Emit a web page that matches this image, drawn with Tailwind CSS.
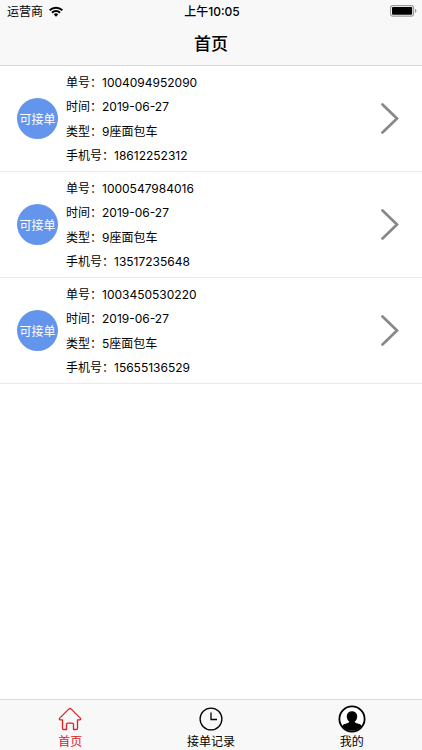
<!DOCTYPE html>
<html lang="zh-CN">
<head>
<meta charset="utf-8">
<meta name="viewport" content="width=device-width, initial-scale=1">
<title>首页</title>
<script src="https://cdn.jsdelivr.net/npm/@tailwindcss/browser@4"></script>
</head>
<body class="flex min-h-screen flex-col bg-white font-[Inter,'Noto_Sans_CJK_SC',sans-serif] text-xs text-black">
<header class="border-b border-[#d8d8d8] bg-[#f8f8f8]">
  <div class="grid h-[22px] grid-cols-3 items-center pr-[5px] pl-[7px]">
    <div class="flex items-center gap-[6px]">
      <span class="pt-0.5">运营商</span>
      <svg class="h-[11px] w-[14px]" viewBox="0 0 14 11" aria-hidden="true"><g fill="none" stroke="#000" stroke-width="2"><path d="M.7 4.2a9 9 0 0 1 12.6 0"/><path d="M3 6.7a5.7 5.7 0 0 1 8 0"/></g><path d="M4.8 8.4a3.1 3.1 0 0 1 4.4 0L7 10.7Z"/></svg>
    </div>
    <time class="pt-0.5 text-center font-medium">上午10:05</time>
    <svg class="h-[12px] w-[27px] justify-self-end" viewBox="0 0 27 12" aria-hidden="true"><rect x=".6" y=".6" width="23" height="10.5" rx="2.4" fill="#fff" stroke="#999" stroke-width="1.1"/><rect x="2" y="2" width="20.2" height="7.7" rx="1"/><path d="M25 3.8c2 .8 2 3.4 0 4.2Z" fill="#999"/></svg>
  </div>
  <h1 class="flex h-[43px] items-center justify-center pt-0.5 text-[17px] font-medium">首页</h1>
</header>
<main class="flex-1">
  <ul>
    <li class="border-b border-[#e9e9e9]">
      <a href="#" class="flex min-h-[105px] items-center pr-[22px] pl-[17px]">
        <span class="mr-2 flex size-[41px] shrink-0 items-center justify-center rounded-full bg-[#6495ed] pt-0.5 whitespace-nowrap text-white">可接单</span>
        <div class="grid flex-1 auto-rows-fr self-stretch pt-[5px] pb-[3px]">
          <p class="flex items-center">单号：1004094952090</p><p class="flex items-center">时间：2019-06-27</p><p class="flex items-center">类型：9座面包车</p><p class="flex items-center">手机号：18612252312</p>
        </div>
        <svg class="h-[31px] w-5" viewBox="0 0 20 31" fill="none" stroke="#888" stroke-width="2.7" stroke-linecap="round" aria-hidden="true"><path d="M2.500 1.500 17 15.500 2.500 29.500"/></svg>
      </a>
    </li>
    <li class="border-b border-[#e9e9e9]">
      <a href="#" class="flex min-h-[105px] items-center pr-[22px] pl-[17px]">
        <span class="mr-2 flex size-[41px] shrink-0 items-center justify-center rounded-full bg-[#6495ed] pt-0.5 whitespace-nowrap text-white">可接单</span>
        <div class="grid flex-1 auto-rows-fr self-stretch pt-[5px] pb-[3px]">
          <p class="flex items-center">单号：1000547984016</p><p class="flex items-center">时间：2019-06-27</p><p class="flex items-center">类型：9座面包车</p><p class="flex items-center">手机号：13517235648</p>
        </div>
        <svg class="h-[31px] w-5" viewBox="0 0 20 31" fill="none" stroke="#888" stroke-width="2.7" stroke-linecap="round" aria-hidden="true"><path d="M2.500 1.500 17 15.500 2.500 29.500"/></svg>
      </a>
    </li>
    <li class="border-b border-[#e9e9e9]">
      <a href="#" class="flex min-h-[105px] items-center pr-[22px] pl-[17px]">
        <span class="mr-2 flex size-[41px] shrink-0 items-center justify-center rounded-full bg-[#6495ed] pt-0.5 whitespace-nowrap text-white">可接单</span>
        <div class="grid flex-1 auto-rows-fr self-stretch pt-[5px] pb-[3px]">
          <p class="flex items-center">单号：1003450530220</p><p class="flex items-center">时间：2019-06-27</p><p class="flex items-center">类型：5座面包车</p><p class="flex items-center">手机号：15655136529</p>
        </div>
        <svg class="h-[31px] w-5" viewBox="0 0 20 31" fill="none" stroke="#888" stroke-width="2.7" stroke-linecap="round" aria-hidden="true"><path d="M2.500 1.500 17 15.500 2.500 29.500"/></svg>
      </a>
    </li>
  </ul>
</main>
<nav class="grid grid-cols-3 border-t border-[#d8d8d8] bg-[#f8f8f8] pt-[5px]">
  <a href="#" aria-current="page" class="flex flex-col items-center gap-px text-[#e02020]">
    <svg class="size-7" viewBox="0 0 28 28" fill="none" stroke="currentColor" stroke-width="1.3" stroke-linejoin="round" aria-hidden="true"><path d="M13 3.900a1.500 1.500 0 0 1 2 0l9.300 9.200c.8.8.4 1.700-.6 1.700h-2.200v8.400c0 .8-.5 1.300-1.300 1.300h-2.700v-5.200c0-.8-.4-1.200-1.200-1.200h-4.600c-.8 0-1.200.4-1.200 1.200v5.200H7.800c-.8 0-1.300-.5-1.300-1.300v-8.400H4.300c-1 0-1.400-.9-.6-1.700Z"/></svg>
    <span>首页</span>
  </a>
  <a href="#" class="flex flex-col items-center gap-px">
    <svg class="size-7" viewBox="0 0 28 28" fill="none" stroke="currentColor" stroke-width="1.3" aria-hidden="true"><circle cx="14" cy="14" r="10.900"/><path d="M14 7.500v7h6"/></svg>
    <span>接单记录</span>
  </a>
  <a href="#" class="flex flex-col items-center gap-px">
    <svg class="size-7" viewBox="0 0 28 28" aria-hidden="true"><circle cx="14" cy="14" r="12.600" fill="#fff" stroke="#000" stroke-width="1.800"/><path d="M14 6.200c-3.100 0-5.200 2.200-5.200 5.200 0 2.200 1 4.200 2.500 5.200-.3 1.300-1.700 1.700-3.500 2.100-1.800.4-3 1.100-3.700 2.200a12.400 12.400 0 0 0 19.800 0c-.7-1.100-1.900-1.800-3.700-2.200-1.800-.4-3.200-.8-3.500-2.100 1.500-1 2.500-3 2.500-5.200 0-3-2.100-5.200-5.200-5.200Z"/></svg>
    <span>我的</span>
  </a>
</nav>
</body>
</html>
